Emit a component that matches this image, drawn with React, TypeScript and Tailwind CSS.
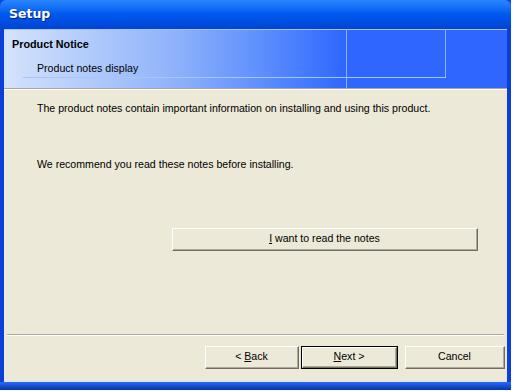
import React from "react";

const font = { fontFamily: '"Liberation Sans", Arial, sans-serif' };

function Btn({ children, w, def }: { children: React.ReactNode; w: string; def?: boolean }) {
  return (
    <div className={`${w} h-[23px] ${def ? "border border-black" : ""}`}>
      <div className="h-full border-t border-l border-white border-b border-r border-b-[#716f64] border-r-[#716f64] bg-[#ece9d8]">
        <div className="h-full flex items-center justify-center border-b border-r border-[#aca899] text-[10.6px] text-black">
          {children}
        </div>
      </div>
    </div>
  );
}

export default function App() {
  return (
    <div className="w-[517px] h-[392px] bg-white" style={font}>
      <div className="w-[511px] h-[390px] flex flex-col bg-[#0a3fd8]">
        {/* title bar */}
        <div className="h-[29px] shrink-0 flex items-center pl-[9px] bg-gradient-to-b from-[#2a86ff] via-[#0058ee] to-[#0044d4] rounded-t-[6px]">
          <span
            className="text-white text-[12.5px] font-bold [text-shadow:1px_1px_0_#0a1f6e]"
            style={{ fontFamily: '"DejaVu Sans", Verdana, sans-serif' }}
          >
            Setup
          </span>
        </div>

        <div className="flex-1 flex flex-col mx-[4px] bg-[#ece9d8]">
          {/* header */}
          <div className="relative h-[59px] shrink-0 bg-gradient-to-r from-[#d4e3fb] via-[#8cb0fa] via-[35%] to-[#2e66fe] to-[68%] pl-[8px] pt-[8px]">
            <div className="absolute left-0 right-0 top-0 h-px bg-[#a9c4fb]" />
            <div className="absolute left-[342px] top-0 bottom-0 w-px bg-[#8fb2fb]" />
            <div className="absolute left-[441px] top-0 h-[48px] w-px bg-[#8fb2fb]" />
            <div className="absolute left-[19px] top-[48px] w-[423px] h-px bg-[#a9c4fb]" />
            <div className="text-[10.8px] font-bold text-black leading-[14px]">Product Notice</div>
            <div className="text-[10.6px] text-black leading-[14px] mt-[10px] ml-[25px]">Product notes display</div>
          </div>
          <div className="h-px bg-[#aca899]" />
          <div className="h-px bg-white" />

          {/* body */}
          <div className="flex-1 flex flex-col pl-[33px] pr-[29px] text-[10.6px] text-black">
            <p className="mt-[11px] leading-[14px]">
              The product notes contain important information on installing and using this product.
            </p>
            <p className="mt-[42px] leading-[14px]">We recommend you read these notes before installing.</p>
            <div className="mt-[57px] flex justify-end">
              <Btn w="w-[306px]">
                <span>
                  <u>I</u> want to read the notes
                </span>
              </Btn>
            </div>
          </div>

          {/* separator */}
          <div className="mx-[3px] h-px bg-[#aca899]" />
          <div className="mx-[3px] h-px bg-white" />

          <div className="h-[45px] shrink-0 flex items-start justify-end pt-[10px] pr-[2px]">
            <Btn w="w-[94px]">
              <span>
                &lt; <u>B</u>ack
              </span>
            </Btn>
            <div className="ml-[2px] mr-[7px]">
              <Btn w="w-[97px]" def>
                <span>
                  <u>N</u>ext &gt;
                </span>
              </Btn>
            </div>
            <Btn w="w-[100px]">Cancel</Btn>
          </div>
          <div className="h-px bg-[#d6e2fb]" />
        </div>
        <div className="h-[8px] shrink-0 bg-gradient-to-b from-[#2b6cf0] to-[#0a2fb0]" />
      </div>
    </div>
  );
}
